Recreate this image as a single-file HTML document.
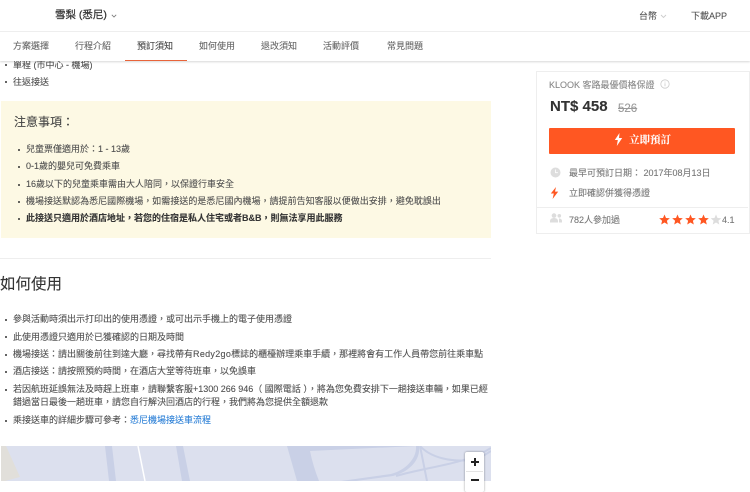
<!DOCTYPE html>
<html lang="zh-Hant">
<head>
<meta charset="utf-8">
<title>雪梨 (悉尼)</title>
<style>
html,body{margin:0;padding:0;background:#fff}
body{width:750px;height:481px;overflow:hidden;position:relative;font-family:"Liberation Sans","Noto Sans CJK TC",sans-serif;font-size:9px;color:#4f4f4f}
.t{position:absolute;white-space:nowrap;line-height:16px;height:16px;-webkit-text-stroke:.1px currentColor}
.b{position:absolute;width:2.4px;height:2.4px;border-radius:50%;background:#333}
.a{position:absolute}
#wrap{position:absolute;left:0;top:0;width:750px;height:481px;filter:blur(.3px)}
</style>
</head>
<body>
<div id="wrap">

<!-- content behind nav -->
<div class="b" style="left:4.500px;top:64px"></div>
<div class="t" style="left:13px;top:57px">單程 (市中心 - 機場)</div>
<div class="b" style="left:4.500px;top:81px"></div>
<div class="t" style="left:13px;top:74px">往返接送</div>

<!-- header -->
<div class="a" style="left:0;top:0;width:750px;height:31px;background:#fff;border-bottom:1px solid #f0f0f0"></div>
<div class="t" style="left:55px;top:7px;font-size:10.500px;color:#333;-webkit-text-stroke:.25px #333">雪梨 (悉尼)</div>
<svg class="a" style="left:111px;top:14px" width="6" height="4" viewBox="0 0 6 4"><path d="M.8 .8L3 3 5.200 .8" fill="none" stroke="#777" stroke-width=".8"/></svg>
<div class="t" style="left:639px;top:8px;color:#555">台幣</div>
<svg class="a" style="left:660px;top:14px" width="7" height="5" viewBox="0 0 7 5"><path d="M1 1l2.500 2.500L6 1" fill="none" stroke="#ccc" stroke-width=".9"/></svg>
<div class="t" style="left:691px;top:8px;color:#555">下載APP</div>

<!-- nav -->
<div class="a" style="left:0;top:32px;width:750px;height:29px;background:#fff;box-shadow:0 1px 2px rgba(0,0,0,.16)"></div>
<div class="t" style="left:13px;top:38px;color:#666">方案選擇</div>
<div class="t" style="left:75px;top:38px;color:#666">行程介紹</div>
<div class="t" style="left:137px;top:38px;color:#444">預訂須知</div>
<div class="t" style="left:199px;top:38px;color:#666">如何使用</div>
<div class="t" style="left:261px;top:38px;color:#666">退改須知</div>
<div class="t" style="left:323px;top:38px;color:#666">活動評價</div>
<div class="t" style="left:387px;top:38px;color:#666">常見問題</div>
<div class="a" style="left:125px;top:60px;width:62px;height:1px;background:#e8643a"></div>

<!-- notice box -->
<div class="a" style="left:1px;top:101px;width:490px;height:137px;background:#fdf9e4"></div>
<div class="t" style="left:14px;top:114px;font-size:12px;color:#444">注意事項：</div>
<div class="b" style="left:17.500px;top:149px"></div>
<div class="t" style="left:26px;top:141px">兒童票僅適用於：1 - 13歲</div>
<div class="b" style="left:17.500px;top:166px"></div>
<div class="t" style="left:26px;top:158px">0-1歲的嬰兒可免費乘車</div>
<div class="b" style="left:17.500px;top:184px"></div>
<div class="t" style="left:26px;top:176px">16歲以下的兒童乘車需由大人陪同，以保證行車安全</div>
<div class="b" style="left:17.500px;top:201px"></div>
<div class="t" style="left:26px;top:193px;letter-spacing:.02px">機場接送默認為悉尼國際機場，如需接送的是悉尼國內機場，請提前告知客服以便做出安排，避免耽誤出</div>
<div class="b" style="left:17.500px;top:218px"></div>
<div class="t" style="left:26px;top:210px;font-weight:bold;color:#333">此接送只適用於酒店地址，若您的住宿是私人住宅或者B&amp;B，則無法享用此服務</div>

<div class="a" style="left:0;top:258px;width:491px;height:1px;background:#eee"></div>

<!-- how to use -->
<div class="t" style="left:0;top:277px;font-size:15.500px;color:#333">如何使用</div>
<div class="b" style="left:4.500px;top:319px"></div>
<div class="t" style="left:13px;top:311px">參與活動時須出示打印出的使用憑證，或可出示手機上的電子使用憑證</div>
<div class="b" style="left:4.500px;top:336px"></div>
<div class="t" style="left:13px;top:329px">此使用憑證只適用於已獲確認的日期及時間</div>
<div class="b" style="left:4.500px;top:354px"></div>
<div class="t" style="left:13px;top:346px">機場接送：請出關後前往到達大廳，尋找帶有<span style="letter-spacing:.3px">Redy2go</span>標誌的櫃檯辦理乘車手續，那裡將會有工作人員帶您前往乘車點</div>
<div class="b" style="left:4.500px;top:371px"></div>
<div class="t" style="left:13px;top:363px">酒店接送：請按照預約時間，在酒店大堂等待班車，以免誤車</div>
<div class="b" style="left:4.500px;top:389px"></div>
<div class="t" style="left:13px;top:381px">若因航班延誤無法及時趕上班車，請聯繫客服+1300 266 946（ 國際電話 ），將為您免費安排下一趟接送車輛，如果已經</div>
<div class="t" style="left:13px;top:394px">錯過當日最後一趟班車，請您自行解決回酒店的行程，我們將為您提供全額退款</div>
<div class="b" style="left:4.500px;top:420px"></div>
<div class="t" style="left:13px;top:412px">乘接送車的詳細步驟可參考：<span style="color:#2b7fd6">悉尼機場接送車流程</span></div>

<!-- map -->
<svg class="a" style="left:1px;top:446px" width="490" height="35" viewBox="0 0 490 35">
<rect width="490" height="35" fill="#dce0ee"/>
<path d="M0 0h5l14 31-15 4H0z" fill="#e1dfda"/>
<path d="M104 0h7l4 35h-7z" fill="#c9d0e6"/>
<path d="M175 0h7l7 35h-8z" fill="#c9d0e6"/>
<path d="M137 0l7 35" stroke="#fff" stroke-width="1.500" fill="none"/>
<path d="M286 0H418C420 14 408 26 392 30L355 35H296Z" fill="#c9d0e6"/>
<path d="M309 5L415 0C416 12 405 24 390 28L340 35H318C314 25 311 15 309 5Z" fill="#dce0ee"/>
<path d="M395 30C430 20 465 18 490 2M419 0L426 35M419 0C430 12 450 16 470 14C478 13 485 8 490 5" stroke="#c9d0e6" stroke-width="2" fill="none"/>
</svg>

<!-- zoom control -->
<div class="a" style="left:465px;top:452px;width:19px;height:40px;background:#fff;border-radius:2px;box-shadow:0 0 2px rgba(0,0,0,.4)"></div>
<div class="a" style="left:471px;top:461px;width:8px;height:2px;background:#222"></div>
<div class="a" style="left:474px;top:458px;width:2px;height:8px;background:#222"></div>
<div class="a" style="left:466px;top:471px;width:17px;height:1px;background:#e4e4e4"></div>
<div class="a" style="left:471px;top:479px;width:8px;height:2px;background:#222"></div>

<!-- sidebar card -->
<div class="a" style="left:536px;top:71px;width:212px;height:161px;border:1px solid #eee;background:#fff"></div>
<div class="t" style="left:549px;top:77px;color:#888">KLOOK 客路最優價格保證</div>
<svg class="a" style="left:660px;top:79px" width="10" height="10" viewBox="0 0 10 10"><circle cx="5" cy="5" r="4.200" fill="none" stroke="#ccc" stroke-width=".8"/><path d="M5 4.200v3M5 2.600v.9" stroke="#ccc" stroke-width=".8"/></svg>
<div class="t" style="left:550px;top:99px;font-size:15px;font-weight:bold;color:#333">NT$ 458</div>
<div class="t" style="left:618px;top:101px;font-size:11.500px;color:#999;text-decoration:line-through">526</div>

<div class="a" style="left:549px;top:128px;width:186px;height:26px;background:#ff5722;border-radius:1px"></div>
<svg class="a" style="left:614px;top:133px" width="9" height="13" viewBox="0 0 9 13"><path d="M5.500 0L0.800 7h3L2.800 13 8.200 5H5z" fill="#fff"/></svg>
<div class="t" style="left:629px;top:133px;font-size:10.500px;font-weight:bold;color:#fff;font-family:'Liberation Serif','Noto Serif CJK SC',serif">立即預訂</div>

<svg class="a" style="left:550px;top:167px" width="11" height="11" viewBox="0 0 11 11"><circle cx="5.500" cy="5.500" r="5" fill="#ddd"/><path d="M5.500 2.500v3.200h2.400" stroke="#fff" stroke-width=".8" fill="none"/></svg>
<div class="t" style="left:569px;top:165px;color:#777">最早可預訂日期： 2017年08月13日</div>
<svg class="a" style="left:550px;top:187px" width="9" height="12" viewBox="0 0 9 12"><path d="M6 0L0.800 6.500h3L2.600 12 8.200 4.600H5z" fill="#ff5722"/></svg>
<div class="t" style="left:569px;top:185px;color:#777">立即確認併獲得憑證</div>

<div class="a" style="left:537px;top:207px;width:211px;height:1px;background:#eee"></div>
<svg class="a" style="left:550px;top:213px" width="12" height="10" viewBox="0 0 12 10"><circle cx="4" cy="2.600" r="2.300" fill="#ddd"/><path d="M0 9.500V8c0-2 2-3 4-3s4 1 4 3v1.500z" fill="#ddd"/><circle cx="9.300" cy="2.800" r="1.800" fill="#ddd"/><path d="M9 9.500h3V8c0-1.600-1.400-2.500-3-2.500z" fill="#ddd"/></svg>
<div class="t" style="left:569px;top:212px;color:#777">782人參加過</div>
<svg class="a" style="left:659px;top:214px" width="64" height="12" viewBox="0 0 64 12">
<path d="M5.500 .5l1.500 3.500 3.800 .3-2.900 2.500 .9 3.700-3.300-2-3.300 2 .9-3.700L.2 4.300 4 4z" fill="#ff5722"/>
<path transform="translate(13 0)" d="M5.500 .5l1.500 3.500 3.800 .3-2.900 2.500 .9 3.700-3.300-2-3.300 2 .9-3.700L.2 4.300 4 4z" fill="#ff5722"/>
<path transform="translate(26 0)" d="M5.500 .5l1.500 3.500 3.800 .3-2.900 2.500 .9 3.700-3.300-2-3.300 2 .9-3.700L.2 4.300 4 4z" fill="#ff5722"/>
<path transform="translate(39 0)" d="M5.500 .5l1.500 3.500 3.800 .3-2.900 2.500 .9 3.700-3.300-2-3.300 2 .9-3.700L.2 4.300 4 4z" fill="#ff5722"/>
<path transform="translate(51.500 0)" d="M5.500 .5l1.500 3.500 3.800 .3-2.900 2.500 .9 3.700-3.300-2-3.300 2 .9-3.700L.2 4.300 4 4z" fill="#ddd"/>
</svg>
<div class="t" style="left:722px;top:212px;color:#777">4.1</div>

</div>
</body>
</html>
